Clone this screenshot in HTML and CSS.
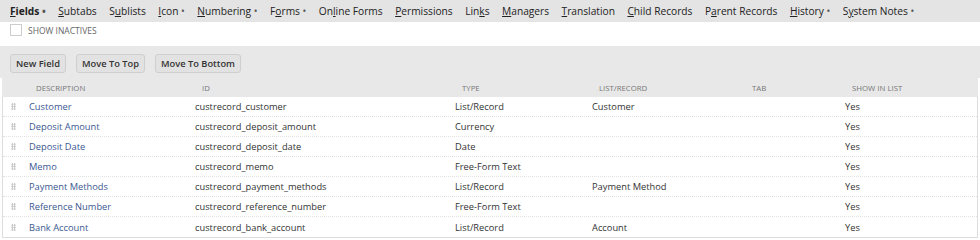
FILE: index.html
```html
<!DOCTYPE html>
<html lang="en">
<head>
  <meta charset="UTF-8" />
  <title>Record Type - Fields</title>
  <link rel="stylesheet" href="styles.css">
</head>
<body>
  <div class="tabs">
    <span class="tab active"><u>F</u>ields <i>•</i></span>
    <span class="tab"><u>S</u>ubtabs</span>
    <span class="tab">S<u>u</u>blists</span>
    <span class="tab"><u>I</u>con <i>•</i></span>
    <span class="tab"><u>N</u>umbering <i>•</i></span>
    <span class="tab">F<u>o</u>rms <i>•</i></span>
    <span class="tab">On<u>l</u>ine Forms</span>
    <span class="tab"><u>P</u>ermissions</span>
    <span class="tab">Lin<u>k</u>s</span>
    <span class="tab"><u>M</u>anagers</span>
    <span class="tab"><u>T</u>ranslation</span>
    <span class="tab"><u>C</u>hild Records</span>
    <span class="tab">P<u>a</u>rent Records</span>
    <span class="tab"><u>H</u>istory <i>•</i></span>
    <span class="tab">S<u>y</u>stem Notes <i>•</i></span>
  </div>

  <div class="filters">
    <label class="check"><span class="box"></span>SHOW INACTIVES</label>
  </div>

  <div class="toolbar">
    <button>New Field</button>
    <button>Move To Top</button>
    <button>Move To Bottom</button>
  </div>

  <div class="list">
    <div class="row head">
      <span></span>
      <span>Description</span>
      <span>ID</span>
      <span>Type</span>
      <span>List/Record</span>
      <span>Tab</span>
      <span>Show In List</span>
    </div>
    <div class="row">
      <span class="grip"></span><a href="#">Customer</a><span>custrecord_customer</span><span>List/Record</span><span>Customer</span><span></span><span>Yes</span>
    </div>
    <div class="row">
      <span class="grip"></span><a href="#">Deposit Amount</a><span>custrecord_deposit_amount</span><span>Currency</span><span></span><span></span><span>Yes</span>
    </div>
    <div class="row">
      <span class="grip"></span><a href="#">Deposit Date</a><span>custrecord_deposit_date</span><span>Date</span><span></span><span></span><span>Yes</span>
    </div>
    <div class="row">
      <span class="grip"></span><a href="#">Memo</a><span>custrecord_memo</span><span>Free-Form Text</span><span></span><span></span><span>Yes</span>
    </div>
    <div class="row">
      <span class="grip"></span><a href="#">Payment Methods</a><span>custrecord_payment_methods</span><span>List/Record</span><span>Payment Method</span><span></span><span>Yes</span>
    </div>
    <div class="row">
      <span class="grip"></span><a href="#">Reference Number</a><span>custrecord_reference_number</span><span>Free-Form Text</span><span></span><span></span><span>Yes</span>
    </div>
    <div class="row">
      <span class="grip"></span><a href="#">Bank Account</a><span>custrecord_bank_account</span><span>List/Record</span><span>Account</span><span></span><span>Yes</span>
    </div>
  </div>
</body>
</html>
```

FILE: styles.css
```css
body {
  margin: 0;
  font-family: "Open Sans", "Liberation Sans", sans-serif;
  color: #333;
  background: white;
}
.tabs {
  height: 22px;
  background: #e4e4e4;
  display: flex;
  align-items: center;
  padding-left: 10px;
  font-size: 10.2px;
  color: #222;
}
.tab {
  margin-right: 12.5px;
  white-space: nowrap;
}
.tab i {
  font-style: normal;
  font-size: 10px;
  color: #555;
}
.tab.active {
  font-weight: bold;
}
.filters {
  height: 24px;
  display: flex;
  align-items: flex-start;
  padding: 2px 0 0 10px;
  box-sizing: border-box;
}
.check {
  display: flex;
  align-items: center;
  font-size: 8.5px;
  color: #666;
}
.check .box {
  width: 12px;
  height: 12px;
  border: 1px solid #ccc;
  box-sizing: border-box;
  background: white;
  margin-right: 6px;
}
.toolbar {
  height: 32px;
  background: #e8e8e8;
  display: flex;
  align-items: center;
  padding: 3px 0 0 10px;
  box-sizing: border-box;
  gap: 10px;
}
.toolbar button {
  font-family: inherit;
  font-size: 9.3px;
  font-weight: 600;
  color: #333;
  background: #e2e2e2;
  border: 1px solid #cfcfcf;
  border-radius: 3px;
  height: 19px;
  padding: 0 5px;
}
.list {
  margin: 0 2px;
  border-left: 1px solid #ddd;
  border-right: 1px solid #ddd;
  border-bottom: 1px solid #ddd;
}
.row {
  display: grid;
  grid-template-columns: 26px 166px 260px 137px 153px 100px 1fr;
  height: 20px;
  align-items: center;
  font-size: 9.3px;
  border-bottom: 1px dotted #e2e2e2;
  box-sizing: border-box;
}
.row:last-child {
  border-bottom: none;
}
.row.head {
  height: 19px;
  background: #e8e8e8;
  font-size: 7.8px;
  text-transform: uppercase;
  color: #777;
  border-bottom: none;
  margin: 0 -1px;
  padding-left: 1px;
}
.row.head span {
  padding-left: 7px;
}
.row a {
  color: #3b5891;
  text-decoration: none;
}
.grip {
  width: 5px;
  height: 7px;
  margin-left: 8px;
  background-image: radial-gradient(circle, #bbb 0.8px, transparent 0.9px);
  background-size: 2.5px 2.4px;
}
```
